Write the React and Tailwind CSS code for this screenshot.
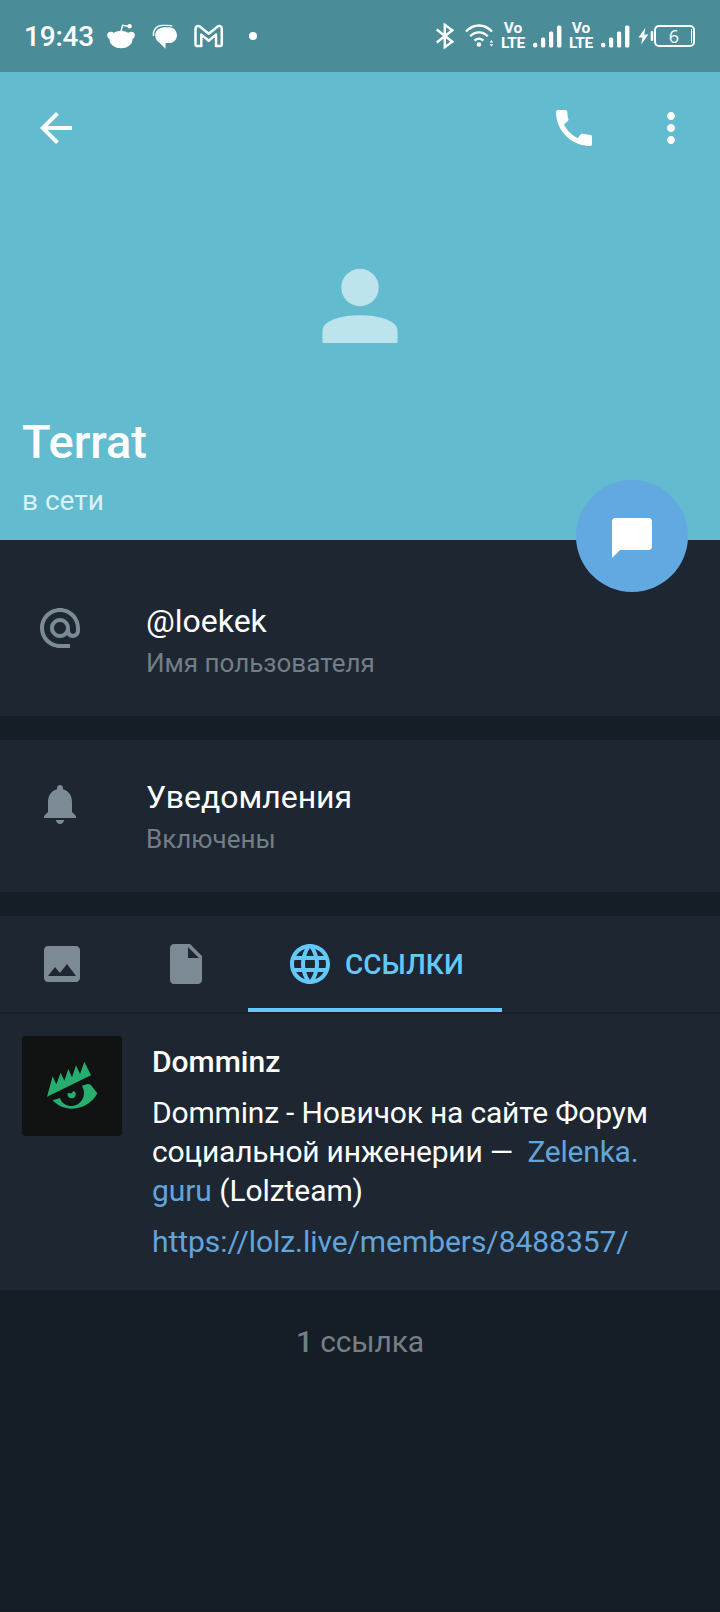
import React from "react";

function Icon({ d, className }) {
  return (
    <svg viewBox="0 0 24 24" className={className} fill="currentColor">
      <path d={d} />
    </svg>
  );
}

const paths = {
  back: "M20 11H7.83l5.59-5.59L12 4l-8 8 8 8 1.41-1.41L7.83 13H20v-2z",
  call: "M20.01 15.38c-1.23 0-2.42-.2-3.53-.56-.35-.12-.74-.03-1.01.24l-1.57 1.97c-2.83-1.35-5.48-3.9-6.89-6.83l1.95-1.66c.27-.28.35-.67.24-1.02-.37-1.11-.56-2.3-.56-3.53 0-.54-.45-.99-.99-.99H4.19C3.65 3 3 3.24 3 3.99 3 13.28 10.73 21 20.01 21c.71 0 .99-.63.99-1.18v-3.45c0-.54-.45-.99-.99-.99z",
  more: "M12 8c1.1 0 2-.9 2-2s-.9-2-2-2-2 .9-2 2 .9 2 2 2zm0 2c-1.1 0-2 .9-2 2s.9 2 2 2 2-.9 2-2-.9-2-2-2zm0 6c-1.1 0-2 .9-2 2s.9 2 2 2 2-.9 2-2-.9-2-2-2z",
  chat: "M20.4 2H3.6C2.7 2 2 2.7 2 3.6V22l4-4h14.4c.9 0 1.6-.7 1.6-1.6V3.6c0-.9-.7-1.6-1.6-1.6z",
  at: "M12 2C6.48 2 2 6.48 2 12s4.48 10 10 10h5v-2h-5c-4.34 0-8-3.66-8-8s3.66-8 8-8 8 3.66 8 8v1.43c0 .79-.71 1.57-1.5 1.57s-1.5-.78-1.5-1.57V12c0-2.76-2.24-5-5-5s-5 2.24-5 5 2.24 5 5 5c1.38 0 2.64-.56 3.54-1.47.65.89 1.77 1.47 2.96 1.47 1.97 0 3.5-1.6 3.5-3.57V12c0-5.52-4.48-10-10-10zm0 13c-1.66 0-3-1.34-3-3s1.34-3 3-3 3 1.34 3 3-1.34 3-3 3z",
  bell: "M12 22c1.1 0 2-.9 2-2h-4c0 1.1.89 2 2 2zm6-6v-5c0-3.07-1.64-5.64-4.5-6.32V4c0-.83-.67-1.5-1.5-1.5s-1.5.67-1.5 1.5v.68C7.63 5.36 6 7.92 6 11v5l-2 2v1h16v-1l-2-2z",
  image: "M21 19V5c0-1.1-.9-2-2-2H5c-1.1 0-2 .9-2 2v14c0 1.1.9 2 2 2h14c1.1 0 2-.9 2-2zM8.5 13.5l2.5 3.01L14.5 12l4.5 6H5l3.5-4.5z",
  file: "M6 2c-1.1 0-1.99.9-1.99 2L4 20c0 1.1.89 2 1.99 2H18c1.1 0 2-.9 2-2V8l-6-6H6zm7 7V3.5L18.5 9H13z",
  globe: "M11.99 2C6.47 2 2 6.48 2 12s4.47 10 9.99 10C17.52 22 22 17.52 22 12S17.52 2 11.99 2zm6.93 6h-2.95c-.32-1.25-.78-2.45-1.38-3.56 1.84.63 3.37 1.91 4.33 3.56zM12 4.04c.83 1.2 1.48 2.53 1.91 3.96h-3.82c.43-1.43 1.08-2.76 1.91-3.96zM4.26 14C4.1 13.36 4 12.69 4 12s.1-1.36.26-2h3.38c-.08.66-.14 1.32-.14 2 0 .68.06 1.34.14 2H4.26zm.82 2h2.95c.32 1.25.78 2.45 1.38 3.56-1.84-.63-3.37-1.9-4.33-3.56zm2.95-8H5.08c.96-1.66 2.49-2.93 4.33-3.56C8.81 5.55 8.35 6.75 8.03 8zM12 19.96c-.83-1.2-1.48-2.53-1.91-3.96h3.82c-.43 1.43-1.08 2.76-1.91 3.96zM14.34 14H9.66c-.09-.66-.16-1.32-.16-2 0-.68.07-1.35.16-2h4.68c.09.65.16 1.32.16 2 0 .68-.07 1.34-.16 2zm.25 5.56c.6-1.11 1.06-2.31 1.38-3.56h2.95c-.96 1.65-2.49 2.93-4.33 3.56zM16.36 14c.08-.66.14-1.32.14-2 0-.68-.06-1.34-.14-2h3.38c.16.64.26 1.31.26 2s-.1 1.36-.26 2h-3.38z",
};

function Volte() {
  return (
    <div className="flex w-[26px] flex-col items-center text-[15.5px] leading-[15px] font-bold">
      <span>Vo</span>
      <span className="tracking-[-0.4px]">LTE</span>
    </div>
  );
}

function Signal() {
  return (
    <svg viewBox="0 0 30 24" className="h-6 w-[30px]" fill="currentColor">
      <rect x="0" y="18.7" width="4.4" height="4.8" rx="2" />
      <rect x="8" y="13.5" width="4.2" height="10" rx="1.5" />
      <rect x="16" y="7.5" width="4.2" height="16" rx="1.5" />
      <rect x="24" y="1.5" width="4.4" height="22" rx="1.5" />
    </svg>
  );
}

function StatusBar() {
  return (
    <div className="flex h-[72px] items-center bg-[#4b8c99] text-white">
      <span className="mt-[2px] ml-[24px] w-[83px] text-[28px] leading-none font-medium tracking-[-0.2px]">19:43</span>
      <svg viewBox="0 0 28 26" className="h-[26px] w-7" fill="currentColor">
        <ellipse cx="14" cy="16.5" rx="11.5" ry="8.8" />
        <circle cx="3.8" cy="12.3" r="3.6" />
        <circle cx="24.2" cy="12.3" r="3.6" />
        <path d="M13.8 9 15.6 2.3 21.5 3.2" fill="none" stroke="currentColor" strokeWidth="1.4" />
        <circle cx="22.6" cy="3.2" r="2.2" />
      </svg>
      <svg viewBox="0 0 26 26" className="ml-[17px] h-[26px] w-[26px]" fill="currentColor">
        <path d="M12 4.2H17C21.5 4.2 25 7.800 25 12.200S21.5 20 17 20H13.5V25.700L7.5 19.700C4.800 18.200 3.200 15.500 3.200 12.300 3.200 7.800 7.300 4.200 12 4.200z" />
        <path d="M1.500 13C.8 6.500 4.800 2.400 10.300 2.400H16c1.800 0 3 .2 4.300.8" fill="none" stroke="currentColor" strokeWidth="1.400" />
      </svg>
      <svg viewBox="0 0 30 24" className="ml-[16px] h-6 w-[30px]" fill="none" stroke="currentColor" strokeWidth="2.5" strokeLinejoin="round">
        <path d="M1.5 4.8C1.5 2 4 1.2 5.8 2.6L14.7 9.8 23.500 2.600C25.300 1.200 27.800 2 27.800 4.800V20.200C27.800 21.300 27.100 22 26 22H22V10.600L14.700 16.800 7.300 10.600V22H3.300C2.200 22 1.500 21.300 1.500 20.200Z" />
      </svg>
      <span className="ml-[25px] h-2 w-2 rounded-full bg-white" />
      <div className="ml-auto flex items-center">
        <svg viewBox="0 0 20 28" className="h-7 w-5" fill="none" stroke="currentColor" strokeWidth="2.4" strokeLinejoin="miter">
          <path d="M.7 7.5 16.3 19.7 8.800 25.200V2.800L16.300 8.300.7 20.500" />
        </svg>
        <svg viewBox="0 0 30 24" className="ml-[9px] h-6 w-[30px]" fill="none" stroke="currentColor" strokeWidth="2.4">
          <path d="M1 7.5C8.500-.6 19.500-.6 27 7.500M5.200 12.300c4.800-5.300 12.700-5.300 17.500 0M9.500 16.600c2.600-2.500 6.300-2.500 8.900 0" />
          <circle cx="13.9" cy="20.5" r="2.3" fill="currentColor" stroke="none" />
          <path d="M24.600 18.400 26.400 16l1.800 2.400zM24.600 20.200l1.800 2.400 1.800-2.400z" fill="currentColor" stroke="none" />
        </svg>
        <div className="ml-[5px]"><Volte /></div>
        <div className="ml-[7px]"><Signal /></div>
        <div className="ml-[5px]"><Volte /></div>
        <div className="ml-[7px]"><Signal /></div>
        <svg viewBox="0 0 16 20" className="ml-[7px] h-5 w-4" fill="currentColor">
          <path d="M7.500 1.500.500 11.500H4.500L3.100 18.500 10.400 8.500H6.200z" />
          <rect x="12.700" y="5" width="2.500" height="10" rx="1.200" />
        </svg>
        <div className="mr-[25px] flex h-[22px] w-[41px] items-center justify-end rounded-[5px] border-2 border-white pr-[1px]">
          <span className="mr-[12px] font-['Open_Sans',sans-serif] text-[18px] leading-none">6</span>
          <span className="h-[14px] w-px bg-white" />
        </div>
      </div>
    </div>
  );
}

function Row({ icon, title, sub, className }) {
  return (
    <div className={className}>
      <Icon d={icon} className="mt-[2px] h-12 w-12 text-[#7b8a95]" />
      <div className="ml-[62px] flex flex-col">
        <span className="text-[32px] leading-[38px] text-white">{title}</span>
        <span className="mt-[7px] text-[26px] leading-[32px] text-[#727e88]">{sub}</span>
      </div>
    </div>
  );
}

export default function App() {
  return (
    <div className="flex h-[1612px] w-[720px] flex-col overflow-hidden bg-[#151e26] font-['Roboto',sans-serif]">
      <StatusBar />
      <header className="relative flex h-[468px] flex-col bg-[#62bbcf] text-white">
        <div className="flex items-center px-8 pt-8">
          <Icon d={paths.back} className="h-12 w-12" />
          <Icon d={paths.call} className="ml-auto h-12 w-12" />
          <Icon d={paths.more} className="mr-[-7px] ml-[49px] h-12 w-12" />
        </div>
        <svg viewBox="0 0 76 76" className="mt-[116px] h-[76px] w-[76px] self-center text-[#bde4ec]" fill="currentColor">
          <circle cx="38" cy="19.5" r="18.7" />
          <path d="M.5 73.5V62.500C.5 53 18 47.200 38 47.200S75.500 53 75.500 62.500V73.500Q75.500 75 74 75H2Q.5 75 .5 73.500z" />
        </svg>
        <div className="flex flex-col items-start pt-[70px] pl-[22px]">
          <span className="text-[47px] leading-[56px] font-medium">Terrat</span>
          <span className="mt-[14px] text-[28px] leading-[34px] text-[#d8f2f8]">в сети</span>
        </div>
        <div className="absolute top-[408px] left-[576px] flex h-28 w-28 items-center justify-center rounded-full bg-[#62a9e1]">
          <Icon d={paths.chat} className="mt-1 h-12 w-12" />
        </div>
      </header>

      <Row className="flex h-[176px] bg-[#1e2731] pt-[62px] pl-9" icon={paths.at} title="@loekek" sub="Имя пользователя" />
      <Row className="mt-6 flex h-[152px] bg-[#1e2731] pt-[38px] pl-9" icon={paths.bell} title="Уведомления" sub="Включены" />

      <nav className="mt-6 flex h-[98px] border-b-2 border-[#17202a] bg-[#1e2731] text-[#7b8a95]">
        <div className="flex w-[124px] items-center pl-[38px]"><Icon d={paths.image} className="h-12 w-12" /></div>
        <div className="flex w-[124px] items-center pl-[38px]"><Icon d={paths.file} className="h-12 w-12" /></div>
        <div className="flex w-[254px] items-center border-b-4 border-[#64c8fb] pt-1 pl-[38px] text-[#64c8fb]">
          <Icon d={paths.globe} className="h-12 w-12" />
          <span className="mt-[2px] ml-[11px] text-[28px] font-medium">ССЫЛКИ</span>
        </div>
      </nav>

      <section className="flex h-[276px] bg-[#1e2731] pt-[22px] pl-[22px]">
        <svg viewBox="0 0 300 300" className="h-[100px] w-[100px] rounded-[3px] bg-[#111312]" fill="#27ae6e">
          <path d="M75 182 92 121 103 145 116 110 127 134 139 99 150 124 162 88 174 114 187 77 207 118z" />
          <path d="M92 193 114 186C120 204 135 211 152 210 175 207 190 186 185 163L180 149 190 146Q198 142 206 146L226 172C211 201 182 218 150 218 125 218 105 207 92 193z" />
          <path d="M136 172 149 172 155 164 161 170C163 180 157 187 149 187 141 187 136 181 136 172z" />
        </svg>
        <div className="ml-[30px] flex flex-col items-start text-[30px] text-white">
          <span className="mt-[8px] leading-9 font-medium">Domminz</span>
          <div className="mt-[13px] leading-[39px] whitespace-pre">
            <p className="tracking-[-0.19px]">Domminz - Новичок на сайте Форум</p>
            <p className="tracking-[-0.22px]">социальной инженерии —  <span className="text-[#62a4dc]">Zelenka.</span></p>
            <p className="tracking-[-0.07px]"><span className="text-[#62a4dc]">guru</span> (Lolzteam)</p>
          </div>
          <span className="mt-[14px] leading-[36px] tracking-[-0.06px] text-[#62a4dc]">https://lolz.live/members/8488357/</span>
        </div>
      </section>

      <footer className="pt-[34px] text-center text-[30px] leading-[36px] tracking-[-0.15px] text-[#777f85]">
        <span className="font-medium">1</span> ссылка
      </footer>
    </div>
  );
}
